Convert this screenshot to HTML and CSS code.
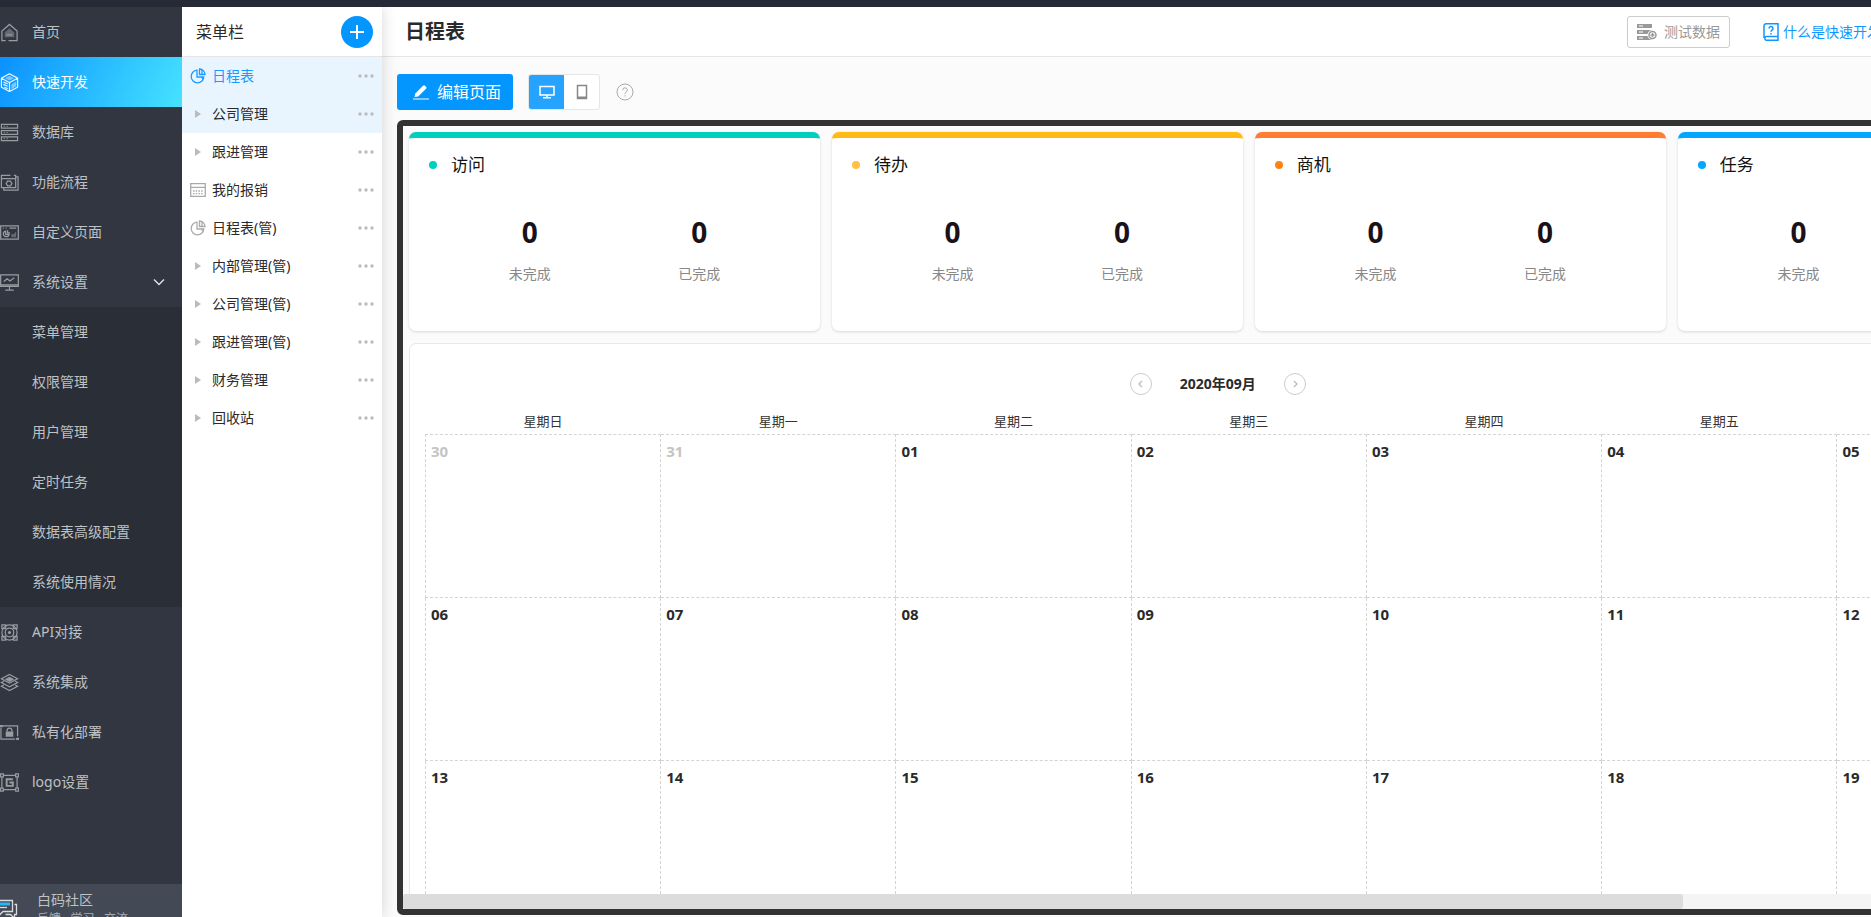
FILE: index.html
```html
<!DOCTYPE html>
<html lang="zh-CN">
<head>
<meta charset="utf-8">
<title>日程表</title>
<link rel="stylesheet" href="styles.css">
</head>
<body>
<svg class="defs" aria-hidden="true">
  <symbol id="pie" viewBox="0 0 16 16"><path d="M7 2.2A6.3 6.3 0 1 0 13.8 9H7z"/><path d="M9.5 1v5.5H15A5.6 5.6 0 0 0 9.5 1z"/><path d="M11.5 9.2l1.5 2M12 1.5v5"/></symbol>
  <symbol id="tri" viewBox="0 0 16 16"><path d="M5 4l6 4-6 4z"/></symbol>
  <symbol id="dots" viewBox="0 0 16 4"><circle cx="2" cy="2" r="1.7"/><circle cx="8" cy="2" r="1.7"/><circle cx="14" cy="2" r="1.7"/></symbol>
</svg>
<div class="topbar"></div>
<div class="app">
  <nav class="side">
    <a class="side-item" href="#"><svg class="side-icon" viewBox="0 0 20 20"><path d="M6 18.500H2V8.500l8-7 8 7v10H9"/><path class="fill dim" d="M5 15V10l5-4.500 5 4.500v5z"/><path d="M7 12.500h6"/></svg>首页</a>
    <a class="side-item active" href="#"><svg class="side-icon" viewBox="0 0 20 20"><path d="M10 .8l8.500 4.700v9.500L10 19.500 1.500 15V5.500zM1.500 5.500L10 10l8.500-4.500M10 10v9.500"/><path class="fill dim" d="M10 3l5 2.500L10 8 5 5.500zM12 12l5-3v5l-5 3z"/><path d="M3.500 9.500l4.500 2M3.500 12l4.500 2M4.500 15l3.500 1.500"/></svg>快速开发</a>
    <a class="side-item" href="#"><svg class="side-icon" viewBox="0 0 20 20"><path d="M1.500 1.500h17v4h-17zM1.500 8h17v4h-17zM1.500 14.500h17v4h-17zM4 3.500h1M7 3.500h1M4 10h1M7 10h1M4 16.500h1M7 16.500h1"/></svg>数据库</a>
    <a class="side-item" href="#"><svg class="side-icon" viewBox="0 0 20 20"><path d="M11 2.500H1.500v13h15V2.500h-2M1.500 6H16M16.500 4H19v14H4v-2.500"/><path d="M8 8.500h3l1.500 2.500L11 13.500H8L6.500 11z"/></svg>功能流程</a>
    <a class="side-item" href="#"><svg class="side-icon" viewBox="0 0 20 20"><path d="M.7 3h18.600v14H.7zM3 5.500h1M6 5.500h1M10 5.500h7"/><path d="M6 8.500a3 3 0 1 0 3.500 3.500H6zM8 7.500v3h2.500"/><path class="fill dim" d="M12 15v-4l2 1 3-3v6z"/></svg>自定义页面</a>
    <a class="side-item" href="#"><svg class="side-icon" viewBox="0 0 20 20"><path d="M.7 2h18.600v12H.7zM10 14v4M5.500 18h9M4 9l3.500-3 3 2.500L15 5M.7 12.500h18.600"/></svg>系统设置<svg class="chevron" viewBox="0 0 12 8"><path d="M1 1.500l5 5 5-5"/></svg></a>
    <div class="side-sub">
      <a class="side-item" href="#">菜单管理</a>
      <a class="side-item" href="#">权限管理</a>
      <a class="side-item" href="#">用户管理</a>
      <a class="side-item" href="#">定时任务</a>
      <a class="side-item" href="#">数据表高级配置</a>
      <a class="side-item" href="#">系统使用情况</a>
    </div>
    <a class="side-item" href="#"><svg class="side-icon" viewBox="0 0 20 20"><circle cx="10" cy="10" r="8"/><circle cx="10" cy="10" r="4.500"/><circle class="fill" cx="10" cy="10" r="1.700"/><path d="M2 2h4v4H2zM14 2h4v4h-4zM2 14h4v4H2zM14 14h4v4h-4z"/></svg>API对接</a>
    <a class="side-item" href="#"><svg class="side-icon" viewBox="0 0 20 20"><path class="fill" d="M10 4l5 2.500-5 3-5-3z"/><path d="M10 1.500l8.500 4.500-8.500 4.500L1.500 6zM4 8.700L1.500 10l8.500 4.500 8.500-4.500L16 8.700M4 12.700L1.500 14l8.500 4.500 8.500-4.500-2.500-1.300"/></svg>系统集成</a>
    <a class="side-item" href="#"><svg class="side-icon" viewBox="0 0 20 20"><path d="M3 3h15.500v11M1 5v12h15"/><path class="fill" d="M0 2h3v2.500H0zM17 15.500h3V18h-3zM6 9h8v5.500H6z"/><path d="M7.500 9V8a2.500 2.500 0 0 1 5 0v1"/></svg>私有化部署</a>
    <a class="side-item" href="#"><svg class="side-icon" viewBox="0 0 20 20"><path d="M4 2.500h12M4 17.500h12M2 4v12M18 4v12M.5 1h3v3h-3zM16.500 1h3v3h-3zM.5 16h3v3h-3zM16.500 16h3v3h-3z"/><path class="bold" d="M13.500 6.500H7v7h6.500V10H10"/></svg>logo设置</a>
    <a class="community" href="#">
      <svg class="community-icon" viewBox="0 0 18 22"><path d="M-4 2.500H12.500v11H3l-4 4M14.500 6.500h2v10h-2v4l-4-4H5.500"/><path class="accent" d="M-2 6H10"/><path d="M0 9.500h7"/></svg>
      <span class="community-text"><span>白码社区</span><small>反馈 · 学习 · 交流</small></span>
    </a>
  </nav>

  <section class="menu">
    <header class="menu-head"><h2>菜单栏</h2><button class="add" aria-label="新增菜单"><svg viewBox="0 0 16 16"><path d="M8 1v14M1 8h14"/></svg></button></header>
    <ul class="menu-list">
      <li class="menu-row tinted current"><a href="#"><svg class="line"><use href="#pie"/></svg>日程表</a><button aria-label="更多"><svg><use href="#dots"/></svg></button></li>
      <li class="menu-row tinted"><a href="#"><svg class="solid"><use href="#tri"/></svg>公司管理</a><button aria-label="更多"><svg><use href="#dots"/></svg></button></li>
      <li class="menu-row"><a href="#"><svg class="solid"><use href="#tri"/></svg>跟进管理</a><button aria-label="更多"><svg><use href="#dots"/></svg></button></li>
      <li class="menu-row"><a href="#"><svg class="line" viewBox="0 0 16 16"><path d="M.7 1.700h14.600v12.600H.7zM.7 5.300h14.600"/><path d="M3 9h10M3 11.700h10" stroke-dasharray="1.500 1.200"/></svg>我的报销</a><button aria-label="更多"><svg><use href="#dots"/></svg></button></li>
      <li class="menu-row"><a href="#"><svg class="line"><use href="#pie"/></svg>日程表(管)</a><button aria-label="更多"><svg><use href="#dots"/></svg></button></li>
      <li class="menu-row"><a href="#"><svg class="solid"><use href="#tri"/></svg>内部管理(管)</a><button aria-label="更多"><svg><use href="#dots"/></svg></button></li>
      <li class="menu-row"><a href="#"><svg class="solid"><use href="#tri"/></svg>公司管理(管)</a><button aria-label="更多"><svg><use href="#dots"/></svg></button></li>
      <li class="menu-row"><a href="#"><svg class="solid"><use href="#tri"/></svg>跟进管理(管)</a><button aria-label="更多"><svg><use href="#dots"/></svg></button></li>
      <li class="menu-row"><a href="#"><svg class="solid"><use href="#tri"/></svg>财务管理</a><button aria-label="更多"><svg><use href="#dots"/></svg></button></li>
      <li class="menu-row"><a href="#"><svg class="solid"><use href="#tri"/></svg>回收站</a><button aria-label="更多"><svg><use href="#dots"/></svg></button></li>
    </ul>
  </section>

  <main class="main">
    <div class="main-inner">
      <header class="head">
        <h1>日程表</h1>
        <button class="test-data"><svg viewBox="0 0 20 18"><path class="body" d="M0 1h15v4H0zM0 7h15v4H0zM0 13h15v4H0z"/><path class="slot" d="M2 3h4M2 9h4M2 15h4"/><circle class="halo" cx="15.500" cy="12" r="5"/><circle cx="15.500" cy="12" r="3.500"/><path class="plus" d="M15.500 10v4M13.500 12h4"/></svg>测试数据</button>
        <a class="guide" href="#"><svg viewBox="0 0 16 18"><path d="M15 13.500H3a2 2 0 0 0 0 3.700h12V.8H3A2 2 0 0 0 1 3v12"/><path class="q" d="M6 5.500a2 2 0 1 1 2.700 1.800q-.7.400-.7 1.500M8 10v1.400"/></svg>什么是快速开发</a>
      </header>

      <div class="tools">
        <button class="edit"><svg viewBox="0 0 16 16"><path d="M1.500 13l.8-3.500L10 1.800q1-1 2 0l1 1q1 1 0 2L5.200 12.500z"/><path class="under" d="M0 15h16"/></svg>编辑页面</button>
        <div class="device">
          <button class="on" aria-label="电脑端"><svg viewBox="0 0 16 14"><path d="M1 1.500h14v8.500H1zM8 10v2.500M4 12.700h8"/></svg></button>
          <button aria-label="手机端"><svg viewBox="0 0 16 16"><path d="M3.500 1.500h9v13h-9z"/><path d="M3.500 13.200h9"/></svg></button>
        </div>
        <button class="help" aria-label="帮助"><svg viewBox="0 0 18 18"><circle cx="9" cy="9" r="8"/><path d="M6.700 7.200a2.300 2.300 0 1 1 3.300 2q-1 .5-1 1.700M9 12.200v1.300"/></svg></button>
      </div>

      <div class="frame">
        <div class="view">
          <div class="canvas">
            <div class="cards">
              <article class="card teal"><h3>访问</h3><dl><div><dd>0</dd><dt>未完成</dt></div><div><dd>0</dd><dt>已完成</dt></div></dl></article>
              <article class="card yellow"><h3>待办</h3><dl><div><dd>0</dd><dt>未完成</dt></div><div><dd>0</dd><dt>已完成</dt></div></dl></article>
              <article class="card orange"><h3>商机</h3><dl><div><dd>0</dd><dt>未完成</dt></div><div><dd>0</dd><dt>已完成</dt></div></dl></article>
              <article class="card blue"><h3>任务</h3><dl><div><dd>0</dd><dt>未完成</dt></div><div><dd>0</dd><dt>已完成</dt></div></dl></article>
            </div>
            <section class="calendar">
              <div class="month">
                <button aria-label="上个月"><svg viewBox="0 0 8 8"><path d="M5 1L2 4l3 3"/></svg></button>
                <strong>2020年09月</strong>
                <button aria-label="下个月"><svg viewBox="0 0 8 8"><path d="M3 1l3 3-3 3"/></svg></button>
              </div>
              <table>
                <thead><tr><th>星期日</th><th>星期一</th><th>星期二</th><th>星期三</th><th>星期四</th><th>星期五</th><th>星期六</th></tr></thead>
                <tbody>
                  <tr><td class="other">30</td><td class="other">31</td><td>01</td><td>02</td><td>03</td><td>04</td><td>05</td></tr>
                  <tr><td>06</td><td>07</td><td>08</td><td>09</td><td>10</td><td>11</td><td>12</td></tr>
                  <tr><td>13</td><td>14</td><td>15</td><td>16</td><td>17</td><td>18</td><td>19</td></tr>
                </tbody>
              </table>
            </section>
          </div>
        </div>
        <div class="track"><div class="thumb"></div></div>
      </div>
    </div>
  </main>
</div>
</body>
</html>
```

FILE: styles.css
```css
* { box-sizing: border-box; }
body {
  margin: 0;
  height: 100vh;
  display: flex;
  flex-direction: column;
  overflow: hidden;
  font: 14px/20px "Noto Sans", "Noto Sans CJK SC", sans-serif;
  color: #2a2a2a;
  background: #fbfbfb;
}
h1, h2, h3, ul, dl, dd { margin: 0; padding: 0; }
a { color: inherit; text-decoration: none; }
button { font: inherit; padding: 0; border: 0; background: none; cursor: pointer; }
svg { display: block; flex: none; fill: none; stroke: currentColor; }
.defs { position: absolute; width: 0; height: 0; }

.topbar { flex: none; height: 7px; background: #262a36; }
.app { flex: 1; min-height: 0; display: grid; grid-template-columns: 182px 200px minmax(0, 1fr); }

/* primary navigation */
.side { display: flex; flex-direction: column; min-height: 0; overflow: hidden; background: #313641; color: #bfc1c4; }
.side-item { flex: none; display: flex; align-items: center; height: 50px; padding-right: 17px; }
.side-icon { width: 19px; height: 19px; margin-right: 13px; color: #999ca1; stroke-width: 1.3; }
.side-icon .fill { fill: currentColor; stroke: none; }
.side-icon .dim { opacity: .5; }
.side-icon .bold { stroke-width: 2; }
.side-item.active { color: #fff; background: linear-gradient(115deg, #0a91ff, #45e3ff); }
.active .side-icon { color: #e6f6ff; }
.chevron { width: 12px; height: 8px; margin-left: auto; color: #e5e6e8; stroke-width: 1.3; }
.side-sub { background: #2a2e36; }
.side-sub .side-item { padding-left: 32px; }
.community { flex: none; display: flex; height: 33px; margin-top: auto; padding-top: 6px; background: #434955; overflow: hidden; }
.community-icon { width: 18px; height: 22px; margin: 8px 19px 0 0; stroke-width: 1.3; color: #ddd; }
.community-icon .accent { stroke: #27b5fb; stroke-width: 3; }
.community-text { display: flex; flex-direction: column; }
.community-text small { font-size: 12px; line-height: 18px; color: #a9acb1; }

/* page menu */
.menu { position: relative; z-index: 1; background: #fff; box-shadow: 0 0 14px rgba(0, 0, 0, .16); clip-path: inset(0 -20px 0 0); }
.menu-head { display: flex; align-items: center; justify-content: space-between; height: 50px; padding: 0 9px 0 14px; border-bottom: 1px solid #e6e6e6; }
.menu-head h2 { font-size: 16px; font-weight: 400; }
.add { display: grid; place-items: center; width: 32px; height: 32px; border-radius: 50%; background: #0396ff; color: #fff; }
.add svg { width: 16px; height: 16px; stroke-width: 2; }
.menu-list { list-style: none; }
.menu-row { display: flex; align-items: center; justify-content: space-between; height: 38px; padding: 0 8px; }
.menu-row a { display: flex; align-items: center; gap: 6px; }
.menu-row a svg { width: 16px; height: 16px; color: #aaa; stroke-width: 1.3; }
.menu-row .solid { fill: #bbb; stroke: none; }
.menu-row button svg { width: 16px; height: 4px; fill: #bbb; stroke: none; }
.tinted { background: #e8f5ff; }
.current a, .menu-row.current a svg { color: #1a9aff; }

/* main column */
.main { min-width: 0; min-height: 0; overflow: hidden; }
.main-inner { display: flex; flex-direction: column; width: calc(100% + 24px); height: 100%; }
.head { flex: none; display: flex; align-items: center; height: 50px; padding: 0 14px 0 23px; background: #fff; border-bottom: 1px solid #e6e6e6; }
.head h1 { margin-right: auto; font-size: 20px; font-weight: 700; }
.test-data { display: flex; align-items: center; gap: 7px; height: 32px; padding: 0 9px; border: 1px solid #ccc; border-radius: 3px; color: #999; }
.test-data svg { width: 20px; height: 18px; }
.test-data .body { fill: #999; stroke: none; }
.test-data .slot { stroke: #fff; }
.test-data circle { fill: #fff; stroke-width: 1.5; }
.test-data .halo { stroke: none; }
.test-data .plus { stroke-width: 1.5; }
.guide { display: flex; align-items: center; gap: 4px; margin-left: 33px; color: #0f97ff; }
.guide svg { width: 16px; height: 18px; stroke-width: 1.5; }

.tools { flex: none; display: flex; align-items: center; padding: 17px 15px 10px; }
.edit { display: flex; align-items: center; gap: 8px; height: 36px; padding: 0 12px 0 16px; border-radius: 3px; background: #0396ff; color: #fff; font-size: 16px; }
.edit svg { width: 16px; height: 16px; fill: currentColor; stroke: none; }
.edit .under { stroke: #bfe4ff; stroke-width: 1.3; }
.device { display: flex; height: 36px; margin-left: 15px; border: 1px solid #e6e6e6; border-radius: 3px; background: #fff; overflow: hidden; }
.device button { display: grid; place-items: center; width: 35px; color: #888; }
.device .on { background: #26a2ff; color: #fff; }
.device svg { width: 16px; height: 16px; stroke-width: 1.5; }
.help { margin-left: 16px; color: #aaa; }
.help svg { width: 18px; height: 18px; }

.frame { flex: 1; min-height: 0; display: flex; flex-direction: column; margin: 0 15px 2px; border: 6px solid #333; border-radius: 6px; background: #fbfbfb; }
.view { flex: 1; min-height: 0; overflow: hidden; }
.canvas { width: 115%; padding: 6px; }
.cards { display: grid; grid-template-columns: repeat(4, 1fr); gap: 12px; }
.card { border-top: 6px solid var(--tone); border-radius: 7px; padding-bottom: 47px; background: #fff; box-shadow: 0 1px 3px rgba(0, 0, 0, .14); }
.card h3 { display: flex; align-items: center; gap: 14px; height: 54px; padding-left: 20px; font-size: 17px; font-weight: 400; color: #111; }
.card h3::before { content: ""; width: 8px; height: 8px; border-radius: 50%; background: var(--dot); }
.card dl { display: grid; grid-template-columns: 1fr 1fr; padding: 20px 36px 0; text-align: center; }
.card dl div { display: flex; flex-direction: column; gap: 12px; }
.card dd { font-size: 28px; line-height: 40px; font-weight: 700; color: #1a1216; }
.card dt { color: #888; }
.teal { --tone: #00cfbd; --dot: #00cfbd; }
.yellow { --tone: #ffba15; --dot: #ffc043; }
.orange { --tone: #ff7c30; --dot: #ff8418; }
.blue { --tone: #03a7ff; --dot: #03a7ff; }

.calendar { margin-top: 12px; padding: 29px 15px 15px; border: 1px solid #e8e8e8; border-radius: 7px; background: #fff; }
.month { display: flex; align-items: center; justify-content: center; gap: 28px; margin-bottom: 13px; padding-right: 62px; }
.month strong { font-size: 14px; }
.month button { display: grid; place-items: center; width: 22px; height: 22px; border: 1px solid #ccc; border-radius: 50%; color: #bbb; }
.month svg { width: 8px; height: 8px; stroke-width: 1.3; }
.calendar table { width: 100%; table-layout: fixed; border-collapse: collapse; }
.calendar th { height: 26px; padding: 0; font-size: 13px; font-weight: 400; color: #333; }
.calendar td { height: 163px; padding: 6px 5px; border: 1px dashed #d4d4d4; vertical-align: top; font-size: 15px; font-weight: 700; }
.calendar .other { color: #c4c4c4; }
.track { flex: none; height: 15px; background: #f4f4f4; }
.thumb { width: 87%; height: 100%; border-radius: 3px; background: #dcdcdc; }
```
